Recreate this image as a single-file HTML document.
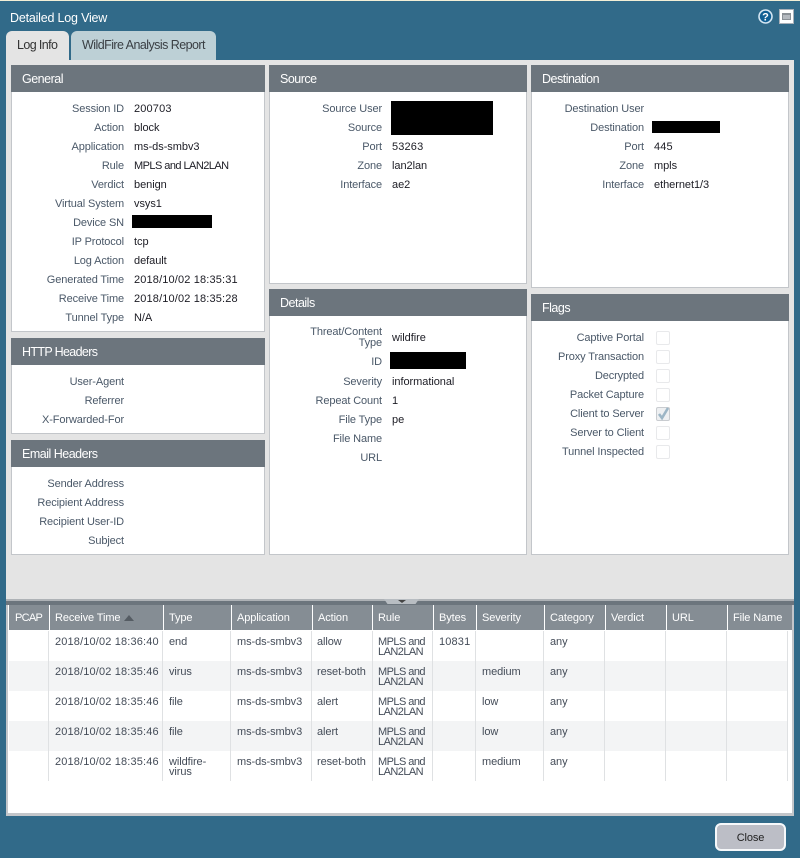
<!DOCTYPE html>
<html><head><meta charset="utf-8"><style>
html,body{margin:0;padding:0}
body{width:800px;height:858px;overflow:hidden;position:relative;background:#316a89;font:11px/14px "Liberation Sans",sans-serif;color:#222}
div,span{position:absolute;white-space:nowrap;box-sizing:border-box}
.h{background:#6c757d;color:#fff;font-size:12.5px;line-height:29px;height:27px;padding-left:11px;letter-spacing:-.5px}
.b{background:#fff;border:1px solid #c3c6ca;border-top:0}
.l{text-align:right;color:#4a5868;height:14px;margin-top:1px;letter-spacing:-.12px}
.g .l{left:11px;width:113px}.g .v{left:134px}
.s .l{left:269px;width:113px}.s .v{left:392px}
.d .l{left:531px;width:113px}.d .v{left:654px}
.v{color:#1c1c24;height:14px;margin-top:1px;letter-spacing:-.05px}
.m{letter-spacing:-.55px !important}
.n{letter-spacing:.15px !important}
.k{background:#000}
.c{left:656px;width:14px;height:14px;border:1px solid #e8e9eb;border-radius:2px;background:#fff}
.th{top:605px;height:25px;background:#858d94;color:#fff;line-height:27px;padding-left:5px;letter-spacing:-.1px}
.r{left:9px;width:778px;height:30px}
.t{color:#444c58;line-height:10px;margin-top:1px;letter-spacing:-.08px}
.cl{top:631px;width:1px;height:150px;background:#dfe1e3}
</style></head><body>
<div style="left:0;top:0;width:800px;height:1px;background:#f3efd6"></div>
<div style="left:10px;top:10px;color:#fff;font-size:12.5px;line-height:16px;letter-spacing:-.2px">Detailed Log View</div>

<svg style="position:absolute;left:758px;top:9px" width="15" height="15" viewBox="0 0 15 15"><circle cx="7.5" cy="7.5" r="6.5" fill="#0f5f94" stroke="#d5e6f2" stroke-width="1.6"/><text x="7.5" y="11.5" text-anchor="middle" fill="#fff" font-family="Liberation Sans" font-weight="bold" font-size="11">?</text></svg>
<div style="left:779px;top:9px;width:15px;height:15px;background:#fff;border:1px solid #a9b0b8"></div>
<div style="left:782px;top:13px;width:9px;height:7px;background:#b4b9bf;border:1px solid #8a9096;border-top-width:2px"></div>

<div style="left:6px;top:31px;width:63px;height:30px;background:#e4e4e4;border-radius:6px 6px 0 0;font-size:12.5px;line-height:28px;padding-left:11px;letter-spacing:-.6px;color:#333">Log Info</div>
<div style="left:71px;top:31px;width:145px;height:29px;background:#bdd0d6;border-radius:6px 6px 0 0;font-size:12.5px;line-height:28px;padding-left:11px;letter-spacing:-.55px;color:#3a3f44">WildFire Analysis Report</div>
<div style="left:6px;top:60px;width:788px;height:541px;background:#e4e4e4"></div>

<!-- General -->
<div class="h" style="left:11px;top:65px;width:254px">General</div>
<div class="b" style="left:11px;top:92px;width:254px;height:240px"></div>
<div class="g">
<div class="l" style="top:101px">Session ID</div><div class="v n" style="top:101px">200703</div>
<div class="l" style="top:120px">Action</div><div class="v" style="top:120px">block</div>
<div class="l" style="top:139px">Application</div><div class="v" style="top:139px">ms-ds-smbv3</div>
<div class="l" style="top:158px">Rule</div><div class="v m" style="top:158px">MPLS and LAN2LAN</div>
<div class="l" style="top:177px">Verdict</div><div class="v" style="top:177px">benign</div>
<div class="l" style="top:196px">Virtual System</div><div class="v" style="top:196px">vsys1</div>
<div class="l" style="top:215px">Device SN</div>
<div class="l" style="top:234px">IP Protocol</div><div class="v" style="top:234px">tcp</div>
<div class="l" style="top:253px">Log Action</div><div class="v" style="top:253px">default</div>
<div class="l" style="top:272px">Generated Time</div><div class="v n" style="top:272px">2018/10/02 18:35:31</div>
<div class="l" style="top:291px">Receive Time</div><div class="v n" style="top:291px">2018/10/02 18:35:28</div>
<div class="l" style="top:310px">Tunnel Type</div><div class="v" style="top:310px">N/A</div>
</div>
<div class="k" style="left:132px;top:215px;width:80px;height:13px"></div>

<!-- HTTP -->
<div class="h" style="left:11px;top:338px;width:254px;letter-spacing:-.65px">HTTP Headers</div>
<div class="b" style="left:11px;top:365px;width:254px;height:69px"></div>
<div class="g">
<div class="l" style="top:374px">User-Agent</div>
<div class="l" style="top:393px">Referrer</div>
<div class="l" style="top:412px">X-Forwarded-For</div>
</div>

<!-- Email -->
<div class="h" style="left:11px;top:440px;width:254px">Email Headers</div>
<div class="b" style="left:11px;top:467px;width:254px;height:88px"></div>
<div class="g">
<div class="l" style="top:476px">Sender Address</div>
<div class="l" style="top:495px">Recipient Address</div>
<div class="l" style="top:514px">Recipient User-ID</div>
<div class="l" style="top:533px">Subject</div>
</div>

<!-- Source -->
<div class="h" style="left:269px;top:65px;width:258px">Source</div>
<div class="b" style="left:269px;top:92px;width:258px;height:192px"></div>
<div class="s">
<div class="l" style="top:101px">Source User</div>
<div class="l" style="top:120px">Source</div>
<div class="l" style="top:139px">Port</div><div class="v n" style="top:139px">53263</div>
<div class="l" style="top:158px">Zone</div><div class="v" style="top:158px">lan2lan</div>
<div class="l" style="top:177px">Interface</div><div class="v" style="top:177px">ae2</div>
</div>
<div class="k" style="left:391px;top:101px;width:102px;height:34px"></div>

<!-- Details -->
<div class="h" style="left:269px;top:289px;width:258px">Details</div>
<div class="b" style="left:269px;top:316px;width:258px;height:239px"></div>
<div class="s">
<div class="l" style="top:326px;line-height:10.5px;height:22px">Threat/Content<br>Type</div><div class="v" style="top:330px">wildfire</div>
<div class="l" style="top:354px">ID</div>
<div class="l" style="top:374px">Severity</div><div class="v" style="top:374px">informational</div>
<div class="l" style="top:393px">Repeat Count</div><div class="v" style="top:393px">1</div>
<div class="l" style="top:412px">File Type</div><div class="v" style="top:412px">pe</div>
<div class="l" style="top:431px">File Name</div>
<div class="l" style="top:450px">URL</div>
</div>
<div class="k" style="left:390px;top:352px;width:76px;height:17px"></div>

<!-- Destination -->
<div class="h" style="left:531px;top:65px;width:258px">Destination</div>
<div class="b" style="left:531px;top:92px;width:258px;height:196px"></div>
<div class="d">
<div class="l" style="top:101px">Destination User</div>
<div class="l" style="top:120px">Destination</div>
<div class="l" style="top:139px">Port</div><div class="v n" style="top:139px">445</div>
<div class="l" style="top:158px">Zone</div><div class="v" style="top:158px">mpls</div>
<div class="l" style="top:177px">Interface</div><div class="v" style="top:177px">ethernet1/3</div>
</div>
<div class="k" style="left:652px;top:121px;width:68px;height:12px"></div>

<!-- Flags -->
<div class="h" style="left:531px;top:294px;width:258px">Flags</div>
<div class="b" style="left:531px;top:321px;width:258px;height:234px"></div>
<div class="d">
<div class="l" style="top:330px">Captive Portal</div><div class="c" style="top:331px"></div>
<div class="l" style="top:349px">Proxy Transaction</div><div class="c" style="top:350px"></div>
<div class="l" style="top:368px">Decrypted</div><div class="c" style="top:369px"></div>
<div class="l" style="top:387px">Packet Capture</div><div class="c" style="top:388px"></div>
<div class="l" style="top:406px">Client to Server</div><div class="c" style="top:407px;background:#eef0f2;border-color:#c9ccd0"></div>
<div class="l" style="top:425px">Server to Client</div><div class="c" style="top:426px"></div>
<div class="l" style="top:444px">Tunnel Inspected</div><div class="c" style="top:445px"></div>
</div>
<svg style="position:absolute;left:656px;top:406px" width="15" height="15" viewBox="0 0 15 15"><path d="M3 8 L6 12 L12 2" fill="none" stroke="#9db6c6" stroke-width="2.6"/></svg>

<!-- Lower grid -->
<div style="left:6px;top:600px;width:788px;height:216px;background:#c3c6ca"></div>
<div style="left:6px;top:599px;width:788px;height:2px;background:#aeb2b6"></div>
<div style="left:6px;top:601px;width:788px;height:4px;background:#6c757d"></div>
<div style="left:384px;top:599px;width:35px;height:5px;background:#b8bdc2;clip-path:polygon(0 0,100% 0,90% 100%,10% 100%)"></div>
<div style="left:398px;top:600px;width:0;height:0;border:4px solid transparent;border-top:3px solid #444;border-bottom:0"></div>
<div style="left:8px;top:605px;width:784px;height:208px;background:#fff"></div>

<div class="th" style="left:9px;width:40px;letter-spacing:-.7px;padding-left:6px">PCAP</div>
<div class="th" style="left:50px;width:113px">Receive Time</div>
<div style="left:124px;top:615px;width:0;height:0;border:5px solid transparent;border-top:0;border-bottom:6px solid #555c63"></div>
<div class="th" style="left:164px;width:67px">Type</div>
<div class="th" style="left:232px;width:80px">Application</div>
<div class="th" style="left:313px;width:59px">Action</div>
<div class="th" style="left:373px;width:60px">Rule</div>
<div class="th" style="left:434px;width:42px">Bytes</div>
<div class="th" style="left:477px;width:67px">Severity</div>
<div class="th" style="left:545px;width:60px">Category</div>
<div class="th" style="left:606px;width:60px">Verdict</div>
<div class="th" style="left:667px;width:60px">URL</div>
<div class="th" style="left:728px;width:64px">File Name</div>

<div class="r" style="top:661px;background:#f3f4f5"></div>
<div class="r" style="top:721px;background:#f3f4f5"></div>

<div class="cl" style="left:48px"></div><div class="cl" style="left:162px"></div><div class="cl" style="left:230px"></div><div class="cl" style="left:311px"></div><div class="cl" style="left:372px"></div><div class="cl" style="left:432px"></div><div class="cl" style="left:475px"></div><div class="cl" style="left:543px"></div><div class="cl" style="left:604px"></div><div class="cl" style="left:665px"></div><div class="cl" style="left:726px"></div><div class="cl" style="left:787px"></div>

<div class="t n" style="left:55px;top:636px">2018/10/02 18:36:40</div><div class="t" style="left:169px;top:636px">end</div><div class="t" style="left:237px;top:636px">ms-ds-smbv3</div><div class="t" style="left:317px;top:636px">allow</div><div class="t m" style="left:378px;top:636px">MPLS and<br>LAN2LAN</div><div class="t n" style="left:439px;top:636px">10831</div><div class="t" style="left:550px;top:636px">any</div>

<div class="t n" style="left:55px;top:666px">2018/10/02 18:35:46</div><div class="t" style="left:169px;top:666px">virus</div><div class="t" style="left:237px;top:666px">ms-ds-smbv3</div><div class="t" style="left:317px;top:666px">reset-both</div><div class="t m" style="left:378px;top:666px">MPLS and<br>LAN2LAN</div><div class="t" style="left:482px;top:666px">medium</div><div class="t" style="left:550px;top:666px">any</div>

<div class="t n" style="left:55px;top:696px">2018/10/02 18:35:46</div><div class="t" style="left:169px;top:696px">file</div><div class="t" style="left:237px;top:696px">ms-ds-smbv3</div><div class="t" style="left:317px;top:696px">alert</div><div class="t m" style="left:378px;top:696px">MPLS and<br>LAN2LAN</div><div class="t" style="left:482px;top:696px">low</div><div class="t" style="left:550px;top:696px">any</div>

<div class="t n" style="left:55px;top:726px">2018/10/02 18:35:46</div><div class="t" style="left:169px;top:726px">file</div><div class="t" style="left:237px;top:726px">ms-ds-smbv3</div><div class="t" style="left:317px;top:726px">alert</div><div class="t m" style="left:378px;top:726px">MPLS and<br>LAN2LAN</div><div class="t" style="left:482px;top:726px">low</div><div class="t" style="left:550px;top:726px">any</div>

<div class="t n" style="left:55px;top:756px">2018/10/02 18:35:46</div><div class="t" style="left:169px;top:756px">wildfire-<br>virus</div><div class="t" style="left:237px;top:756px">ms-ds-smbv3</div><div class="t" style="left:317px;top:756px">reset-both</div><div class="t m" style="left:378px;top:756px">MPLS and<br>LAN2LAN</div><div class="t" style="left:482px;top:756px">medium</div><div class="t" style="left:550px;top:756px">any</div>

<div style="left:715px;top:823px;width:71px;height:28px;background:#bcbec6;border:2px solid #f6f8fa;border-radius:6px;text-align:center;line-height:26px;color:#222;font-size:11px;letter-spacing:-.1px">Close</div>
</body></html>
